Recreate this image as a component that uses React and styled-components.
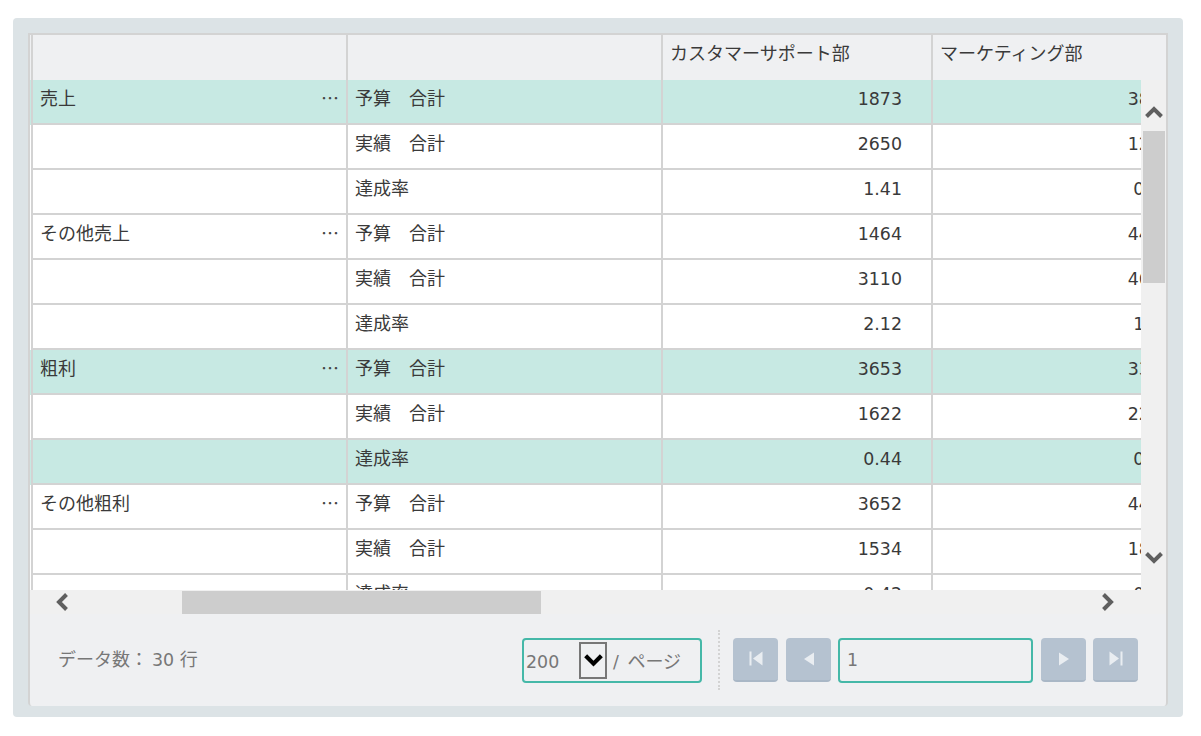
import React from "react";
import styled, { createGlobalStyle } from "styled-components";

const GlobalStyle = createGlobalStyle`
  html, body {
    margin: 0;
    padding: 0;
    background: #fff;
  }
  body {
    font-family: "Noto Sans CJK JP", "Liberation Sans", sans-serif;
    font-size: 18px;
    color: #3a3a3a;
  }
`;

const Page = styled.div`
  width: 1201px;
  height: 736px;
  padding: 18px 18px 19px 13px;
  box-sizing: border-box;
`;

const Panel = styled.div`
  height: 100%;
  background: #dce3e6;
  border-radius: 4px;
  padding: 15px 15px 11px;
  box-sizing: border-box;
`;

const Inner = styled.div`
  height: 100%;
  display: flex;
  flex-direction: column;
  background: #eff0f2;
  border-top: 2px solid #d3d3d3;
  border-left: 2px solid #d3d3d3;
  border-right: 2px solid #d3d3d3;
  border-radius: 0 0 4px 4px;
  box-sizing: border-box;
`;

const Row = styled.div`
  display: grid;
  grid-template-columns: 318px 315px 270px 270px;
  width: 1173px;
  height: 45px;
  background: ${p => (p.$highlight ? "#c7e9e3" : p.$header ? "#eff0f2" : "#fff")};
  flex-shrink: 0;
`;

const HeaderRow = styled.div`
  height: 45px;
  overflow: hidden;
  flex-shrink: 0;
`;

const Cell = styled.div`
  display: flex;
  align-items: center;
  justify-content: ${p => (p.$number ? "flex-end" : "space-between")};
  box-sizing: border-box;
  padding: ${p => (p.$number ? "0 29px 6px 0" : p.$header ? "0 8px 12px 7px" : "0 8px 9px 7px")};
  border-right: 2px solid #d3d3d3;
  border-bottom: ${p => (p.$header ? "none" : "2px solid #d3d3d3")};
  border-left: ${p => (p.$first ? "2px solid #d3d3d3" : "none")};
  margin-left: ${p => (p.$first ? "1px" : "0")};
  white-space: pre;
  overflow: hidden;
`;

const Num = styled.span`
  font-family: "DejaVu Sans", sans-serif;
  font-size: 17.4px;
`;

const Slash = styled(Num)`
  margin-right: 3px;
`;

const Dots = styled.span`
  letter-spacing: -1px;
  color: #444;
`;

const BodyWrap = styled.div`
  display: flex;
  height: 510px;
  flex-shrink: 0;
`;

const Viewport = styled.div`
  width: 1111px;
  overflow: hidden;
`;

const VBar = styled.div`
  width: 25px;
  background: #f0f0f0;
  display: flex;
  flex-direction: column;
  align-items: center;
  padding-top: 21px;
  box-sizing: border-box;
`;

const VThumb = styled.div`
  width: 22px;
  height: 152px;
  margin: 8px 0 264px 1px;
  background: #cdcdcd;
`;

const HBar = styled.div`
  height: 24px;
  background: #f0f0f0;
  display: flex;
  align-items: center;
  flex-shrink: 0;
  padding-left: 21px;
`;

const HThumb = styled.div`
  width: 359px;
  height: 23px;
  margin: 1px 556px 0 109px;
  background: #cdcdcd;
`;

const Footer = styled.div`
  flex: 1;
  display: flex;
  align-items: center;
  padding: 0 28px 0 28px;
  color: #777;
`;

const Count = styled.div`
  flex: 1;
  padding-bottom: 4px;
  white-space: pre;
`;

const PageSize = styled.div`
  width: 180px;
  height: 45px;
  box-sizing: border-box;
  border: 2px solid #45b8a8;
  border-radius: 4px;
  display: flex;
  align-items: center;
  padding-left: 2px;
  white-space: pre;
`;

const SizeValue = styled.span`
  width: 53px;
`;

const SelectButton = styled.div`
  width: 28px;
  height: 37px;
  box-sizing: border-box;
  border: 2px solid #777;
  display: flex;
  align-items: center;
  justify-content: center;
  margin-right: 6px;
`;

const Separator = styled.div`
  height: 60px;
  margin: 0 13px 0 16px;
  border-left: 2px dotted #d3d3d3;
`;

const Pager = styled.div`
  display: flex;
  align-items: center;
  gap: 8px;
`;

const PageButton = styled.div`
  width: 45px;
  height: 44px;
  box-sizing: border-box;
  background: #b5c2d0;
  border-bottom: 2px solid #a9b7c6;
  border-radius: 4px;
  display: flex;
  align-items: center;
  justify-content: center;
  margin-left: ${p => p.$nudge || 0}px;
`;

const PageInput = styled.div`
  width: 195px;
  height: 45px;
  box-sizing: border-box;
  border: 2px solid #45b8a8;
  border-radius: 4px;
  display: flex;
  align-items: center;
  padding-left: 7px;
  margin-left: -1px;
`;

const rows = [
  ["売上", "予算　合計", "1873", "3812", true],
  ["", "実績　合計", "2650", "1238"],
  ["", "達成率", "1.41", "0.40"],
  ["その他売上", "予算　合計", "1464", "4421"],
  ["", "実績　合計", "3110", "4602"],
  ["", "達成率", "2.12", "1.04"],
  ["粗利", "予算　合計", "3653", "3325", true],
  ["", "実績　合計", "1622", "2236"],
  ["", "達成率", "0.44", "0.64", true],
  ["その他粗利", "予算　合計", "3652", "4417"],
  ["", "実績　合計", "1534", "1823"],
  ["", "達成率", "0.42", "0.41"]
];

const Chevron = ({ dir, color = "#5f5f5f", size = 22 }) => {
  const turn = { up: 0, right: 90, down: 180, left: 270 }[dir];
  return (
    <svg width={size} height={size} viewBox="0 0 22 22" style={{ transform: `rotate(${turn}deg)` }}>
      <path d="M3.5 15.5 L11 8 L18.5 15.5" fill="none" stroke={color} strokeWidth="4" />
    </svg>
  );
};

const First = () => (
  <svg width="18" height="18" viewBox="0 0 18 18">
    <path d="M2.5 1.5h2v14h-2z M15.5 1.5v14L6 8.5z" fill="#e9edf1" />
  </svg>
);
const Prev = () => (
  <svg width="18" height="18" viewBox="0 0 18 18">
    <path d="M14 2.5v13L4 9z" fill="#e9edf1" />
  </svg>
);
const Next = () => (
  <svg width="18" height="18" viewBox="0 0 18 18">
    <path d="M4 2.5v13L14 9z" fill="#e9edf1" />
  </svg>
);
const Last = () => (
  <svg width="18" height="18" viewBox="0 0 18 18">
    <path d="M13.5 1.5h2v14h-2z M2.5 1.5v14L12 8.5z" fill="#e9edf1" />
  </svg>
);

function App() {
  return (
    <Page>
      <GlobalStyle />
      <Panel>
        <Inner>
          <HeaderRow>
            <Row $header>
              <Cell $header $first />
              <Cell $header />
              <Cell $header>カスタマーサポート部</Cell>
              <Cell $header>マーケティング部</Cell>
            </Row>
          </HeaderRow>
          <BodyWrap>
            <Viewport>
              {rows.map((r, i) => (
                <Row key={i} $highlight={r[4]}>
                  <Cell $first>
                    <span>{r[0]}</span>
                    {r[0] && <Dots>⋯</Dots>}
                  </Cell>
                  <Cell>{r[1]}</Cell>
                  <Cell $number><Num>{r[2]}</Num></Cell>
                  <Cell $number><Num>{r[3]}</Num></Cell>
                </Row>
              ))}
            </Viewport>
            <VBar>
              <Chevron dir="up" />
              <VThumb />
              <Chevron dir="down" />
            </VBar>
          </BodyWrap>
          <HBar>
            <Chevron dir="left" />
            <HThumb />
            <Chevron dir="right" />
          </HBar>
          <Footer>
            <Count>データ数： <Num>30 </Num>行</Count>
            <PageSize>
              <SizeValue><Num>200</Num></SizeValue>
              <SelectButton><Chevron dir="down" color="#000" size={23} /></SelectButton>
              <span><Slash>/ </Slash>ページ</span>
            </PageSize>
            <Separator />
            <Pager>
              <PageButton><First /></PageButton>
              <PageButton><Prev /></PageButton>
              <PageInput><Num>1</Num></PageInput>
              <PageButton><Next /></PageButton>
              <PageButton $nudge={-1}><Last /></PageButton>
            </Pager>
          </Footer>
        </Inner>
      </Panel>
    </Page>
  );
}

export default App;
